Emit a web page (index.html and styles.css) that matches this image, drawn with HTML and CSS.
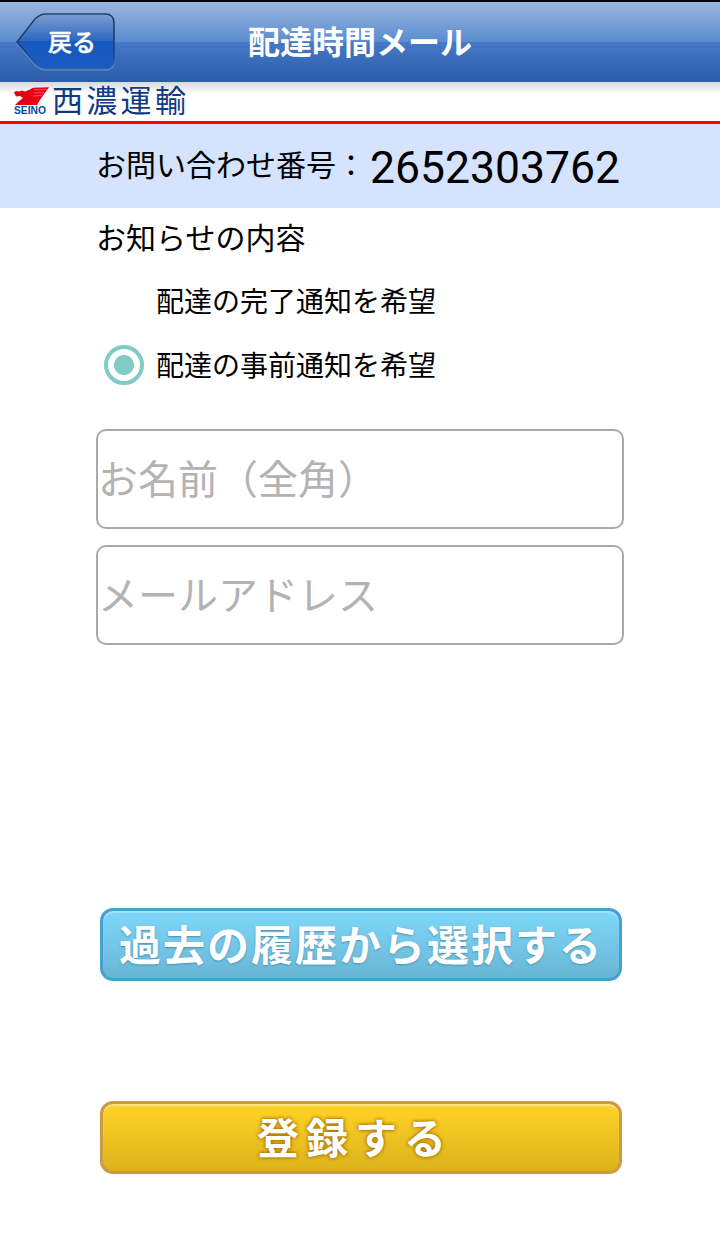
FILE: index.html
```html
<!DOCTYPE html>
<html lang="ja">
<head>
  <meta charset="UTF-8">
  <meta name="viewport" content="width=device-width, initial-scale=1.0">
  <title>配達時間メール</title>
  <link rel="stylesheet" href="styles.css">
</head>
<body>
  <header class="header">
    <a href="#" class="back">
      <svg class="back-shape" width="102" height="60" viewBox="0 0 102 60">
        <defs>
          <linearGradient id="backFill" x1="0" y1="0" x2="0" y2="1">
            <stop offset="0" stop-color="#7d9fd2"/>
            <stop offset="0.5" stop-color="#2b66c0"/>
            <stop offset="0.5" stop-color="#1959bd"/>
            <stop offset="1" stop-color="#195bc0"/>
          </linearGradient>
          <linearGradient id="backEdge" x1="0" y1="0" x2="0" y2="1">
            <stop offset="0" stop-color="#293f62"/>
            <stop offset="0.6" stop-color="#173a74"/>
            <stop offset="1" stop-color="#2a5cab"/>
          </linearGradient>
        </defs>
        <path d="M2 30 L20 7 Q25 2 31 2 H90 Q99 2 99 11 V48 Q99 57 90 57 H31 Q25 57 20 52 Z" transform="translate(0 1)" fill="none" stroke="#7fa3dc" stroke-opacity="0.5" stroke-width="1.6"/>
        <path d="M2 30 L20 7 Q25 2 31 2 H90 Q99 2 99 11 V47 Q99 56 90 56 H31 Q25 56 20 51 Z" fill="url(#backFill)" stroke="url(#backEdge)" stroke-width="1.6"/>
      </svg>
      <span class="back-text">戻る</span>
    </a>
    <h1 class="title">配達時間メール</h1>
  </header>

  <div class="brand">
    <svg class="brand-mark" width="36" height="30" viewBox="0 0 36 30">
      <path d="M1 5.500 L3 4 L6 4.500 L9 3.500 L12 4.500 L16 3 L20 0.800 L36 0.300 L31 7 L29 10 L27 13 L24 18 H2 L5 15 L8 12.500 L10 11 L7 9 L3 9.500 L2 7.500 Z" fill="#e60014"/>
      <path d="M21 3 L33.500 2.500 M21 6 L31 5.500 M20 9 L29 8.500" stroke="#f4777e" stroke-width="0.7" fill="none"/>
      <text x="1" y="27.200" class="brand-seino" textLength="32" lengthAdjust="spacingAndGlyphs">SEINO</text>
    </svg>
    <span class="brand-name">西濃運輸</span>
  </div>

  <div class="number-row">
    <span class="number-label">お問い合わせ番号：</span>
    <span class="number">2652303762</span>
  </div>

  <form class="form">
    <h2 class="form-title">お知らせの内容</h2>
    <div class="option">
      <span class="radio"></span>
      <span>配達の完了通知を希望</span>
    </div>
    <div class="option">
      <span class="radio radio-on"></span>
      <span>配達の事前通知を希望</span>
    </div>
    <input class="field" type="text" placeholder="お名前（全角）">
    <input class="field" type="text" placeholder="メールアドレス">
    <button type="button" class="button button-history">過去の履歴から選択する</button>
    <button type="button" class="button button-submit">登録する</button>
  </form>
</body>
</html>
```
FILE: styles.css
```css
* {
  box-sizing: border-box;
}

body {
  margin: 0;
  min-height: 1234px;
  background-color: #fff;
  color: #000;
  font-family: "Noto Sans CJK JP", sans-serif;
}

/* Header */
.header {
  display: grid;
  grid-template-columns: 232px 1fr 232px;
  height: 82px;
  border-top: 2px solid #000;
  background: linear-gradient(#9ab5de 0%, #5a8cd0 50%, #4679c8 50%, #2a5ca8 100%);
}

.back {
  position: relative;
  width: 102px;
  height: 60px;
  margin: 10px 0 0 15px;
  color: #fff;
  text-decoration: none;
}

.back-shape {
  display: block;
}

.back-text {
  position: absolute;
  left: 33px;
  top: 11px;
  font-size: 24px;
  line-height: 36px;
  font-weight: 500;
  -webkit-text-stroke: 0.4px #fff;
}

.title {
  margin: 0;
  color: #fff;
  font-size: 32px;
  line-height: 76px;
  font-weight: 700;
  text-align: center;
}

/* Company logo */
.brand {
  display: flex;
  align-items: flex-start;
  height: 42px;
  padding: 3px 0 0 13px;
  border-bottom: 3px solid #f00;
  background: linear-gradient(#d8d8d8, #fff 12px);
}

.brand-mark {
  flex: none;
  margin-top: 2px;
}

.brand-seino {
  font: 700 11px "Liberation Sans", sans-serif;
  fill: #0b4a9b;
}

.brand-name {
  margin-left: 3px;
  color: #103a86;
  font-size: 31px;
  line-height: 28px;
  letter-spacing: 3.3px;
}

/* Inquiry number */
.number-row {
  display: flex;
  align-items: center;
  height: 84px;
  padding-left: 96px;
  background-color: #d6e3ff;
}

.number-label {
  width: 274px;
  font-size: 30px;
  line-height: 79px;
  height: 84px;
}

.number {
  padding-top: 4px;
  font-family: Roboto, sans-serif;
  font-size: 44.5px;
  line-height: 80px;
}

/* Form */
.form {
  display: flex;
  flex-direction: column;
  padding: 0 96px;
}

.form-title {
  height: 60px;
  margin: 0;
  font-size: 30px;
  line-height: 57px;
  font-weight: 400;
}

.option {
  display: flex;
  align-items: center;
  height: 64px;
  font-size: 28px;
  line-height: 64px;
}

.radio {
  width: 40px;
  height: 40px;
  margin: 2px 12px 0 8px;
  border-radius: 50%;
}

.radio-on {
  border: 4px solid #80cbc4;
  background: radial-gradient(circle, #80cbc4 0 9.6px, #fff 10.4px);
}

.field {
  width: 528px;
  height: 100px;
  margin: 0 0 16px;
  padding: 0 0 4px;
  border: 2px solid #a9a9a9;
  border-radius: 10px;
  background: #fff;
  font-family: inherit;
  font-size: 40px;
}

.option + .field {
  margin-top: 33px;
}

.field::placeholder {
  color: #b3b3b3;
  opacity: 1;
}

.button {
  width: 522px;
  height: 73px;
  margin: 0 0 0 4px;
  padding: 0 0 4px;
  border-radius: 13px;
  color: #fff;
  font-family: inherit;
  font-size: 42px;
  line-height: 60px;
  font-weight: 700;
}

.button-history {
  margin-top: 247px;
  border: 3px solid #45a1d0;
  background: linear-gradient(#7ed8fa, #69b5d5);
  box-shadow: inset 0 2px 1px #a7e2fa;
  letter-spacing: 2px;
  text-shadow: 0 1px 2px #4d8fae;
}

.button-submit {
  margin-top: 120px;
  padding-right: 12px;
  border: 3px solid #cc9a43;
  background: linear-gradient(#ffd426, #dbb21b);
  box-shadow: inset 0 2px 1px #ffe28a;
  letter-spacing: 7px;
  text-shadow: 0 0 4px #a86b00, 0 0 3px #b87a00;
}
```
